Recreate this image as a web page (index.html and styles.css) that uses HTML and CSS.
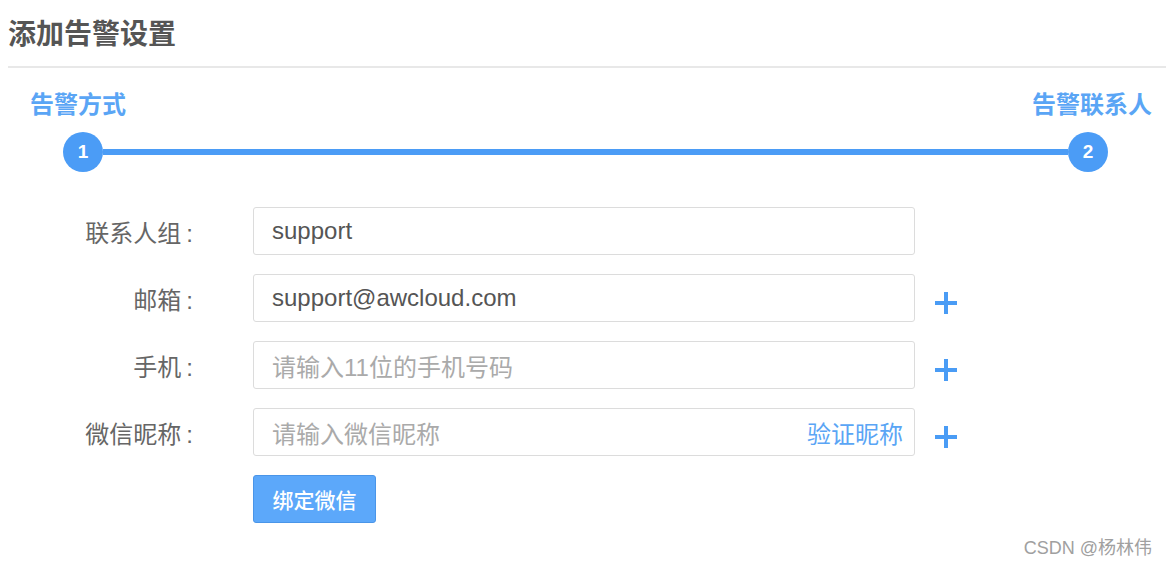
FILE: index.html
```html
<!DOCTYPE html>
<html lang="zh-CN">
<head>
<meta charset="utf-8">
<title>添加告警设置</title>
<link rel="stylesheet" href="styles.css">
</head>
<body>
<div class="page">
  <header class="header">
    <h1 class="title">添加告警设置</h1>
  </header>

  <section class="steps">
    <div class="step-labels">
      <span class="step-label">告警方式</span>
      <span class="step-label">告警联系人</span>
    </div>
    <div class="track">
      <span class="dot">1</span>
      <span class="line"></span>
      <span class="dot">2</span>
    </div>
  </section>

  <form class="form">
    <div class="row">
      <label class="label">联系人组<span class="colon">:</span></label>
      <div class="field"><span class="value">support</span></div>
      <span class="plus-slot"></span>
    </div>
    <div class="row">
      <label class="label">邮箱<span class="colon">:</span></label>
      <div class="field"><span class="value">support@awcloud.com</span></div>
      <span class="plus-slot">
        <svg class="plus" viewBox="0 0 24 24" width="24" height="24"><path d="M12 1V23M1 12H23" stroke="#4a9cf5" stroke-width="4" fill="none"/></svg>
      </span>
    </div>
    <div class="row">
      <label class="label">手机<span class="colon">:</span></label>
      <div class="field"><span class="placeholder">请输入11位的手机号码</span></div>
      <span class="plus-slot">
        <svg class="plus" viewBox="0 0 24 24" width="24" height="24"><path d="M12 1V23M1 12H23" stroke="#4a9cf5" stroke-width="4" fill="none"/></svg>
      </span>
    </div>
    <div class="row">
      <label class="label">微信昵称<span class="colon">:</span></label>
      <div class="field"><span class="placeholder">请输入微信昵称</span><span class="verify">验证昵称</span></div>
      <span class="plus-slot">
        <svg class="plus" viewBox="0 0 24 24" width="24" height="24"><path d="M12 1V23M1 12H23" stroke="#4a9cf5" stroke-width="4" fill="none"/></svg>
      </span>
    </div>
    <div class="row">
      <span></span>
      <div><button type="button" class="btn">绑定微信</button></div>
      <span></span>
    </div>
  </form>

  <div class="watermark">CSDN @杨林伟</div>
</div>
</body>
</html>
```

FILE: styles.css
```css
* { box-sizing: border-box; }
html, body { margin: 0; padding: 0; background: #fff; }
body {
  font-family: "Liberation Sans", "Noto Sans CJK SC", sans-serif;
  color: #555;
  width: 1166px;
  height: 566px;
  overflow: hidden;
}
.page { position: relative; height: 566px; }

.header {
  margin-left: 8px;
  height: 68px;
  border-bottom: 2px solid #e8e8e8;
  padding-top: 18px;
}
.title {
  margin: 0;
  font-family: "Noto Sans CJK SC", sans-serif;
  font-size: 28px;
  line-height: 28px;
  font-weight: 700;
  color: #555;
}

.steps { padding-top: 22px; }
.step-labels {
  display: flex;
  justify-content: space-between;
  padding: 0 14px 0 30px;
}
.step-label {
  font-family: "Noto Sans CJK SC", sans-serif;
  font-size: 24px;
  line-height: 26px;
  font-weight: 700;
  color: #5aa5f5;
}
.track {
  display: flex;
  align-items: center;
  margin: 16px 58px 0 63px;
}
.dot {
  width: 40px;
  height: 40px;
  border-radius: 50%;
  background: #4b9cf6;
  color: #fff;
  font-family: "Liberation Sans", sans-serif;
  font-weight: 700;
  font-size: 19px;
  display: flex;
  align-items: center;
  justify-content: center;
  flex: none;
}
.line {
  flex: 1;
  height: 6px;
  background: #4b9cf6;
}

.form {
  margin-top: 35px;
  display: flex;
  flex-direction: column;
  gap: 19px;
}
.row {
  display: grid;
  grid-template-columns: 193px 662px 60px;
  column-gap: 60px;
  align-items: center;
}
.row > :last-child { margin-left: -41px; }
.label {
  text-align: right;
  font-family: "Noto Sans CJK SC", sans-serif;
  font-size: 24px;
  color: #666;
  white-space: nowrap;
}
.colon {
  font-family: "Liberation Sans", sans-serif;
  margin-left: 5px;
}
.field {
  height: 48px;
  border: 1px solid #dcdcdc;
  border-radius: 3px;
  background: #fff;
  display: flex;
  align-items: center;
  justify-content: space-between;
  padding: 0 11px 0 18px;
  font-size: 24px;
}
.value { color: #555; }
.placeholder {
  color: #aaa;
  font-family: "Liberation Sans", "Noto Sans CJK SC", sans-serif;
}
.verify {
  color: #5aa5f5;
  font-family: "Noto Sans CJK SC", sans-serif;
}
.plus-slot { display: flex; align-items: center; padding-top: 10px; }
.plus { display: block; }

.btn {
  height: 48px;
  width: 123px;
  border: 1px solid #4a95e8;
  border-radius: 3px;
  background: #5ca8fa;
  color: #fff;
  font-family: "Noto Sans CJK SC", sans-serif;
  font-size: 21px;
  font-weight: 500;
  padding: 0;
}

.watermark {
  position: absolute;
  right: 14px;
  bottom: 7px;
  font-size: 18px;
  color: #a0a0a0;
  font-family: "Liberation Sans", "Noto Sans CJK SC", sans-serif;
}
```
